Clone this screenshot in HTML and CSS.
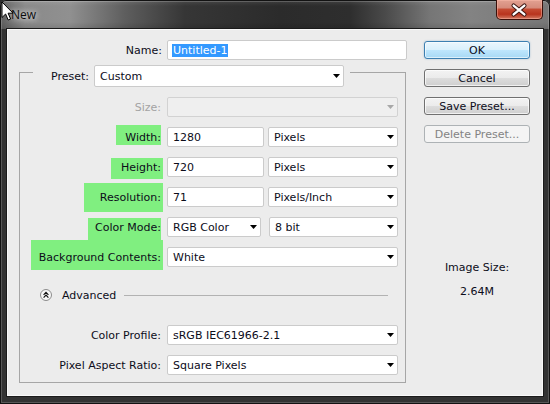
FILE: index.html
```html
<!DOCTYPE html>
<html>
<head>
<meta charset="utf-8">
<title>New</title>
<link rel="stylesheet" href="styles.css">
</head>
<body>
<div class="window">
  <div class="titlebar">
    <span class="title">New</span>
    <div class="close">
      <svg width="47" height="20" viewBox="0 0 47 20">
        <path d="M18 5.5 L29 14.5 M29 5.5 L18 14.5" stroke="#3a1410" stroke-width="4.4" stroke-linecap="round" fill="none"/>
        <path d="M18 5.5 L29 14.5 M29 5.5 L18 14.5" stroke="#ffffff" stroke-width="2.4" stroke-linecap="round" fill="none"/>
      </svg>
    </div>
  </div>
  <div class="client">
    <div class="left">
      <div class="name-row">
        <span class="name-label">Name:</span>
        <div class="field name-field"><span class="sel">Untitled-1</span></div>
      </div>
      <div class="group">
        <div class="preset-row">
          <span class="preset-label">Preset:</span>
          <div class="select preset-select"><span>Custom</span><i class="arrow"></i></div>
        </div>
        <div class="frow">
          <span class="flabel"><span class="ltxt disabled">Size:</span></span>
          <div class="select w-full is-disabled"><span></span><i class="arrow"></i></div>
        </div>
        <div class="frow">
          <span class="flabel"><span class="ltxt hl hl-width">Width:</span></span>
          <div class="field w-num">1280</div>
          <div class="select w-unit"><span>Pixels</span><i class="arrow"></i></div>
        </div>
        <div class="frow">
          <span class="flabel"><span class="ltxt hl hl-height">Height:</span></span>
          <div class="field w-num">720</div>
          <div class="select w-unit"><span>Pixels</span><i class="arrow"></i></div>
        </div>
        <div class="frow">
          <span class="flabel"><span class="ltxt hl hl-res">Resolution:</span></span>
          <div class="field w-num">71</div>
          <div class="select w-unit"><span>Pixels/Inch</span><i class="arrow"></i></div>
        </div>
        <div class="frow">
          <span class="flabel"><span class="ltxt hl hl-cm">Color Mode:</span></span>
          <div class="select w-mode"><span>RGB Color</span><i class="arrow"></i></div>
          <div class="select w-bit"><span>8 bit</span><i class="arrow"></i></div>
        </div>
        <div class="frow">
          <span class="flabel"><span class="ltxt hl hl-bg">Background Contents:</span></span>
          <div class="select w-full"><span>White</span><i class="arrow"></i></div>
        </div>
        <div class="adv-row">
          <svg class="adv-icon" width="12" height="12" viewBox="0 0 12 12">
            <circle cx="6" cy="6" r="5.5" fill="#f8f8f8" stroke="#8c8c8c"/>
            <path d="M3.6 5.8 L6 3.4 L8.4 5.8 M3.6 8.6 L6 6.2 L8.4 8.6" fill="none" stroke="#111" stroke-width="1.2"/>
          </svg>
          <span class="adv-text">Advanced</span>
          <span class="adv-line"></span>
        </div>
        <div class="frow cp-row">
          <span class="flabel"><span class="ltxt">Color Profile:</span></span>
          <div class="select w-full"><span>sRGB IEC61966-2.1</span><i class="arrow"></i></div>
        </div>
        <div class="frow">
          <span class="flabel"><span class="ltxt">Pixel Aspect Ratio:</span></span>
          <div class="select w-full"><span>Square Pixels</span><i class="arrow"></i></div>
        </div>
      </div>
    </div>
    <div class="right">
      <div class="btn btn-default">OK</div>
      <div class="btn">Cancel</div>
      <div class="btn">Save Preset...</div>
      <div class="btn btn-disabled">Delete Preset...</div>
      <div class="imgsize">Image Size:</div>
      <div class="imgsize-val">2.64M</div>
    </div>
  </div>
</div>
<svg class="cursor" width="13" height="20" viewBox="0 0 13 20">
  <path d="M1 1 L1 16.5 L4.6 13 L7.2 19 L9.6 18 L7.1 12.2 L12 12.2 Z" fill="#fff" stroke="#000" stroke-width="1" stroke-linejoin="miter"/>
</svg>
</body>
</html>
```
FILE: styles.css
```css
* { box-sizing: border-box; margin: 0; padding: 0; }
html, body { width: 550px; height: 404px; overflow: hidden; background: #2b2b2b; }
body {
  font-family: "DejaVu Sans", "Liberation Sans", sans-serif;
  font-size: 11px;
  color: #0c0c1a;
  position: relative;
}
.window {
  width: 550px;
  height: 404px;
  display: flex;
  flex-direction: column;
  padding: 0 7px 8px;
  border-radius: 6px 6px 0 0;
  background:
    linear-gradient(180deg, rgba(255,255,255,0.10) 0, rgba(255,255,255,0) 6px, rgba(0,0,0,0) 22px, rgba(0,0,0,0.12) 29px) top left / 100% 29px no-repeat,
    linear-gradient(90deg, #5f5f5f 0, #8a8a8a 25px, #909090 70px, #5e5e5e 125px, #363636 185px, #2b2b2b 280px, #2e2e2e 350px, #4a4a4a 385px, #767676 430px, #838383 470px, #777 550px) top left / 100% 29px no-repeat,
    #333;
  box-shadow: inset 0 0 0 1px #121212, inset 0 0 0 2px rgba(255,255,255,0.18);
}
.titlebar {
  height: 29px;
  display: flex;
  align-items: flex-start;
  flex-shrink: 0;
}
.title {
  font-family: "Open Sans", "DejaVu Sans", sans-serif;
  font-size: 12px;
  line-height: 16px;
  margin: 7px 0 0 4px;
  color: #0c0c0c;
  text-shadow: 0 0 5px rgba(255,255,255,0.8), 0 0 9px rgba(255,255,255,0.6);
}
.close {
  margin-left: auto;
  width: 47px;
  height: 20px;
  border: 1px solid #3a100a;
  border-top: none;
  border-radius: 0 0 5px 5px;
  background: linear-gradient(180deg, #e2a192 0%, #d68c7c 40%, #c44a32 50%, #b8341e 75%, #d37a62 100%);
  box-shadow: inset 0 0 0 1px rgba(255,190,175,0.45);
  display: flex;
}
.close svg { display: block; margin-left: -1px; }

.client {
  height: 367px;
  display: flex;
  background: #ececec;
  border: 1px solid #f9f9f9;
  box-shadow: 0 0 0 1px #1b1b1b;
}
.left { width: 399px; flex-shrink: 0; }

.name-row {
  display: flex;
  align-items: center;
  height: 20px;
  margin-top: 10px;
}
.name-label { width: 154px; text-align: right; }
.field {
  height: 20px;
  background: #fff;
  border: 1px solid #cbcbcb;
  border-radius: 2px;
  display: flex;
  align-items: center;
  padding-left: 5px;
  flex-shrink: 0;
}
.name-field { width: 240px; margin-left: 5px; padding-left: 4px; }
.sel {
  background: #3399ff;
  color: #fff;
  line-height: 13px;
  padding: 0 1px;
}

.group {
  margin: 12px 0 0 11px;
  width: 387px;
  border: 1px solid #a6a6a6;
  padding-bottom: 7px;
}
.preset-row {
  display: flex;
  align-items: center;
  height: 22px;
  width: 317px;
  margin: -8px 0 0 13px;
  background: #ececec;
}
.preset-label { width: 56px; text-align: right; flex-shrink: 0; }
.select {
  height: 20px;
  background: #fff;
  border: 1px solid #cbcbcb;
  border-radius: 2px;
  display: flex;
  align-items: center;
  padding-left: 5px;
  flex-shrink: 0;
  white-space: nowrap;
}
.arrow {
  display: block;
  width: 7px;
  height: 4px;
  margin-left: auto;
  margin-right: 3px;
  background: #000;
  clip-path: polygon(0 0, 100% 0, 50% 100%);
}
.preset-select { width: 250px; height: 22px; margin-left: 5px; }
.is-disabled { background: #efefef; border-color: #d2d2d2; }
.is-disabled .arrow { background: #a8a8a8; }

.frow {
  display: flex;
  align-items: center;
  height: 20px;
  margin-top: 10px;
}
.flabel {
  width: 141px;
  height: 20px;
  display: flex;
  justify-content: flex-end;
  align-items: center;
  flex-shrink: 0;
}
.ltxt { white-space: nowrap; }
.disabled { color: #a3a3a3; }
.hl {
  background: #80ef80;
  display: flex;
  align-items: center;
  justify-content: flex-end;
  flex-shrink: 0;
}
.hl-width  { width: 45px;  height: 20px; margin-bottom: 4px; padding-top: 4px; }
.hl-height { width: 52px;  height: 21px; margin-top: 3px; padding-bottom: 3px; margin-right: -2px; padding-right: 2px; }
.hl-res    { width: 79px;  height: 29px; margin-right: -2px; padding-right: 2px; }
.hl-cm     { width: 73px;  height: 22px; margin-top: 4px; padding-bottom: 4px; margin-left: 1px; }
.hl-bg     { width: 132px; height: 30px; margin-bottom: 4px; padding-top: 4px; margin-right: -2px; padding-right: 2px; }

.frow .select, .frow .field { margin-left: 6px; }
.w-full { width: 231px; }
.w-num { width: 97px; }
.frow .w-unit { width: 130px; margin-left: 4px; }
.w-mode { width: 94px; }
.frow .w-bit { width: 129px; margin-left: 8px; }

.adv-row {
  display: flex;
  align-items: center;
  height: 14px;
  margin-top: 21px;
  padding-left: 20px;
}
.adv-icon { display: block; flex-shrink: 0; }
.adv-text { margin-left: 10px; }
.adv-line {
  flex: 1;
  height: 1px;
  background: #b2b2b2;
  margin: 0 17px 0 8px;
}
.cp-row { margin-top: 23px; }

.right {
  width: 106px;
  margin-left: 17px;
  display: flex;
  flex-direction: column;
  padding-top: 11px;
}
.btn {
  height: 18px;
  margin-bottom: 10px;
  border: 1px solid #707070;
  border-radius: 3px;
  background: linear-gradient(180deg, #f3f3f3 0%, #ebebeb 50%, #dddddd 50%, #cfcfcf 100%);
  box-shadow: inset 0 0 0 1px rgba(255,255,255,0.7);
  display: flex;
  align-items: center;
  justify-content: center;
  white-space: nowrap;
}
.btn-default {
  border-color: #3c7fb1;
  background: linear-gradient(180deg, #eaf6fd 0%, #d9f0fc 50%, #bee6fd 50%, #a7d9f5 100%);
  box-shadow: inset 0 0 0 1px rgba(255,255,255,0.6), 0 0 2px rgba(60,127,177,0.4);
}
.btn-disabled {
  border-color: #adb2b5;
  background: #f4f4f4;
  box-shadow: none;
  color: #838383;
}
.imgsize {
  margin-top: 108px;
  line-height: 14px;
  text-align: center;
}
.imgsize-val {
  margin-top: 10px;
  line-height: 14px;
  text-align: center;
}
.cursor {
  position: absolute;
  left: 1px;
  top: 1px;
}
```
